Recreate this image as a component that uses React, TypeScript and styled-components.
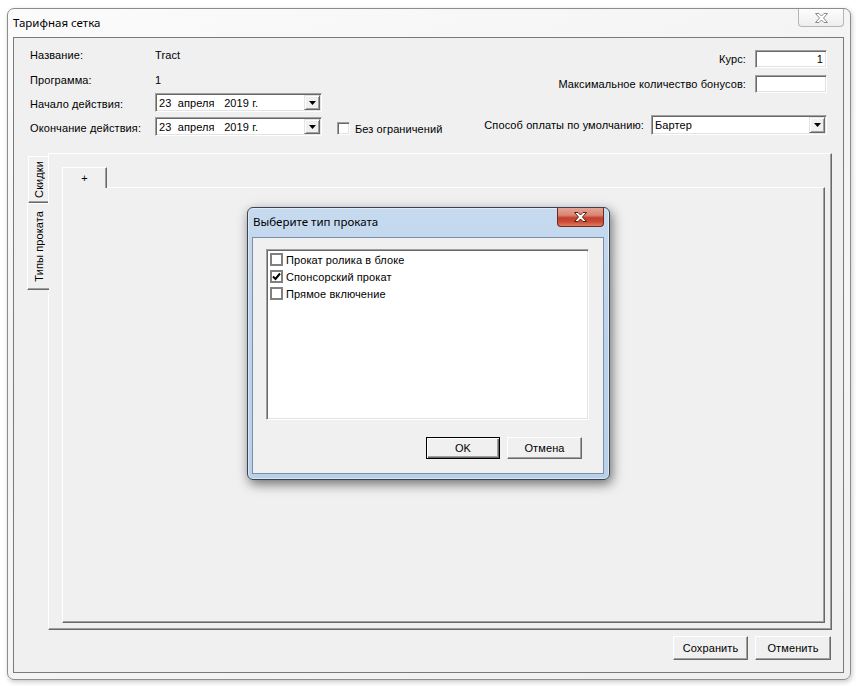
import React from "react";
import styled, { createGlobalStyle, css } from "styled-components";

const Global = createGlobalStyle`
  html, body { margin: 0; padding: 0; background: #ffffff; }
  body {
    font-family: "Liberation Sans", Arial, sans-serif;
    font-size: 11px;
    letter-spacing: 0.1px;
    color: #000;
  }
  * { box-sizing: border-box; }
`;

const sunken = css`
  border: 1px solid;
  border-color: #a0a0a0 #ffffff #ffffff #a0a0a0;
  box-shadow: inset 1px 1px 0 #696969, inset -1px -1px 0 #e3e3e3;
  background: #ffffff;
  padding: 1px;
`;

const raised = css`
  border: 1px solid;
  border-color: #ffffff #696969 #696969 #ffffff;
  box-shadow: inset -1px -1px 0 #a0a0a0;
  background: #f0f0f0;
`;

const Screen = styled.div`
  position: relative;
  width: 856px;
  height: 686px;
  padding: 8px 0 0 7px;
  overflow: hidden;
  background: #ffffff;
`;

const Window = styled.div`
  width: 844px;
  height: 672px;
  border: 1px solid #8c8c8c;
  border-radius: 7px;
  background: linear-gradient(160deg, #fbfbfb 0%, #f3f3f3 40%, #f6f6f6 60%, #efefef 100%);
  box-shadow: 1px 2px 5px rgba(0, 0, 0, 0.22);
  display: flex;
  flex-direction: column;
`;

const TitleBar = styled.div`
  height: 28px;
  display: flex;
  justify-content: space-between;
  align-items: flex-start;
  padding: 0 6px 0 5px;
`;

const TitleText = styled.div`
  font-family: "Noto Sans", "Open Sans", sans-serif;
  font-size: 11.5px;
  letter-spacing: 0;
  line-height: 28px;
  color: #000;
`;

const InactiveClose = styled.div`
  width: 46px;
  height: 18px;
  border: 1px solid #b5b5b5;
  border-top: none;
  border-radius: 0 0 4px 4px;
  background: linear-gradient(#fdfdfd, #eeeeee);
  display: flex;
  align-items: center;
  justify-content: center;
`;

const Client = styled.div`
  flex: 1;
  margin: 0 6px 6px 5px;
  border: 1px solid #7a7a7a;
  background: #f0f0f0;
  display: flex;
  flex-direction: column;
`;

const TopForm = styled.div`
  height: 97px;
  display: flex;
  justify-content: space-between;
  padding: 8px 16px 0 16px;
`;

const LeftGrid = styled.div`
  display: grid;
  grid-template-columns: 125px auto;
  grid-template-rows: 18px 19px 19px 19px;
  row-gap: 5px;
  align-items: center;
`;

const Label = styled.div<{ $drop?: number }>`
  white-space: nowrap;
  padding-top: ${(p) => (p.$drop ?? 0) * 2}px;
`;

const Value = styled.div<{ $drop?: number }>`
  white-space: nowrap;
  padding-top: ${(p) => (p.$drop ?? 0) * 2}px;
`;

const Inline = styled.div`
  display: flex;
  align-items: center;
`;

const Combo = styled.div<{ $w: number; $h: number }>`
  ${sunken};
  width: ${(p) => p.$w}px;
  height: ${(p) => p.$h}px;
  display: flex;
  align-items: stretch;
`;

const ComboText = styled.div`
  flex: 1;
  padding-left: 2px;
  white-space: pre;
  display: flex;
  align-items: center;
`;

const DropButton = styled.div`
  width: 16px;
  border: 1px solid;
  border-color: #e3e3e3 #696969 #696969 #e3e3e3;
  box-shadow: inset 1px 1px 0 #ffffff, inset -1px -1px 0 #a0a0a0;
  background: #f0f0f0;
  display: flex;
  align-items: center;
  justify-content: center;
`;

const CheckGroup = styled.div`
  display: flex;
  align-items: center;
  gap: 5px;
  margin-left: 15px;
  padding-top: 4px;
`;

const SunkenBox = styled.div`
  ${sunken};
  width: 13px;
  height: 13px;
`;

const RightBlock = styled.div`
  display: flex;
  flex-direction: column;
  align-items: flex-end;
  padding-top: 4px;
`;

const FieldRow = styled.div<{ $gap: number; $top: number }>`
  display: flex;
  align-items: center;
  gap: ${(p) => p.$gap}px;
  margin-top: ${(p) => p.$top}px;
`;

const TextBox = styled.div<{ $w: number }>`
  ${sunken};
  width: ${(p) => p.$w}px;
  height: 18px;
  text-align: right;
  padding-right: 3px;
  line-height: 14px;
`;

const TabArea = styled.div`
  flex: 1;
  display: flex;
  margin: 18px 11px 0 13px;
`;

const SideTabs = styled.div`
  width: 21px;
  flex-shrink: 0;
  display: flex;
  flex-direction: column;
  padding-top: 3px;
`;

const SideTab = styled.div<{ $active?: boolean; $h: number }>`
  height: ${(p) => p.$h}px;
  border-top: 1px solid #ffffff;
  border-left: 1px solid #ffffff;
  border-bottom: 1px solid #696969;
  box-shadow: inset 0 -1px 0 #a0a0a0;
  background: #f0f0f0;
  display: flex;
  align-items: center;
  justify-content: center;
  position: relative;
  ${(p) =>
    p.$active
      ? css`
          width: 22px;
          margin-right: -1px;
          z-index: 1;
        `
      : css`
          width: 20px;
          margin-left: 1px;
        `}
`;

const VerticalText = styled.span`
  writing-mode: vertical-rl;
  transform: rotate(180deg);
  white-space: nowrap;
`;

const Panel = styled.div`
  flex: 1;
  border-top: 1px solid #ffffff;
  border-left: 1px solid #ffffff;
  border-right: 1px solid #696969;
  border-bottom: 1px solid #696969;
  box-shadow: inset -1px -1px 0 #a0a0a0;
  padding: 13px 6px 6px 13px;
  display: flex;
  flex-direction: column;
`;

const TopTabs = styled.div`
  height: 20px;
  display: flex;
`;

const TopTab = styled.div`
  width: 45px;
  height: 21px;
  margin-bottom: -1px;
  position: relative;
  z-index: 1;
  background: #f0f0f0;
  border-top: 1px solid #ffffff;
  border-left: 1px solid #ffffff;
  border-right: 1px solid #696969;
  box-shadow: inset -1px 0 0 #a0a0a0;
  display: flex;
  align-items: center;
  justify-content: center;
  padding-bottom: 1px;
`;

const Page = styled.div`
  flex: 1;
  border-top: 1px solid #ffffff;
  border-left: 1px solid #ffffff;
  border-right: 1px solid #696969;
  border-bottom: 1px solid #696969;
  box-shadow: inset -1px -1px 0 #a0a0a0;
`;

const ButtonRow = styled.div<{ $pad: string; $top?: number }>`
  display: flex;
  justify-content: flex-end;
  gap: 7px;
  padding: ${(p) => p.$pad};
  margin-top: ${(p) => p.$top ?? 0}px;
`;

const WinButton = styled.div<{ $w: number; $h: number; $default?: boolean }>`
  width: ${(p) => p.$w}px;
  height: ${(p) => p.$h}px;
  ${raised};
  display: flex;
  align-items: center;
  justify-content: center;
  ${(p) =>
    p.$default &&
    css`
      border: 1px solid #000000;
      box-shadow: inset 1px 1px 0 #ffffff, inset -1px -1px 0 #696969,
        inset -2px -2px 0 #a0a0a0;
    `}
`;

/* ---------- dialog ---------- */

const Dialog = styled.div`
  position: absolute;
  left: 247px;
  top: 207px;
  width: 363px;
  height: 273px;
  border: 1px solid #3a4350;
  border-radius: 6px;
  background: linear-gradient(#c6daef 0%, #bcd3eb 40%, #b8d0ea 100%);
  box-shadow: 2px 4px 12px rgba(0, 0, 0, 0.55), inset 0 0 0 1px rgba(255, 255, 255, 0.45);
  display: flex;
  flex-direction: column;
`;

const DialogTitleBar = styled.div`
  height: 29px;
  display: flex;
  justify-content: space-between;
  align-items: flex-start;
  padding: 0 5px 0 5px;
`;

const RedClose = styled.div`
  width: 47px;
  height: 19px;
  border: 1px solid #6e2a20;
  border-top: none;
  border-radius: 0 0 4px 4px;
  background: linear-gradient(#e4a596 0%, #d98573 40%, #c4402b 55%, #c84a35 75%, #e07a5f 100%);
  display: flex;
  align-items: center;
  justify-content: center;
`;

const DialogClient = styled.div`
  flex: 1;
  margin: 0 5px 5px 4px;
  border: 1px solid #7b8ea6;
  background: #f0f0f0;
  padding: 11px 20px 0 13px;
  display: flex;
  flex-direction: column;
`;

const ListBox = styled.div`
  ${sunken};
  width: 323px;
  height: 171px;
  padding: 1px 1px 1px 3px;
`;

const ListItem = styled.div`
  height: 17px;
  display: flex;
  align-items: center;
  gap: 3px;
  white-space: nowrap;
`;

const FlatBox = styled.div`
  width: 13px;
  height: 13px;
  border: 2px solid #808080;
  background: #ffffff;
  display: flex;
  align-items: center;
  justify-content: center;
`;

const XGlyph = ({ fill, stroke }: { fill: string; stroke: string }) => (
  <svg width="13" height="10" viewBox="0 0 13 10">
    <polygon
      points="0.5,0.5 4,0.5 6.5,3 9,0.5 12.5,0.5 8.5,5 12.5,9.5 9,9.5 6.5,7 4,9.5 0.5,9.5 4.5,5"
      fill={fill}
      stroke={stroke}
      strokeWidth="1"
      strokeLinejoin="round"
    />
  </svg>
);

const Arrow = () => (
  <svg width="7" height="4" viewBox="0 0 7 4">
    <polygon points="0,0 7,0 3.5,4" fill="#000" />
  </svg>
);

const Check = () => (
  <svg width="9" height="9" viewBox="0 0 9 9">
    <path d="M1 4.5 L3.5 7 L8 1.5" fill="none" stroke="#000" strokeWidth="2" />
  </svg>
);

export default function App() {
  return (
    <Screen>
      <Global />
      <Window>
        <TitleBar>
          <TitleText>Тарифная сетка</TitleText>
          <InactiveClose>
            <XGlyph fill="#ffffff" stroke="#8a8a8a" />
          </InactiveClose>
        </TitleBar>
        <Client>
          <TopForm>
            <LeftGrid>
              <Label>Название:</Label>
              <Value>Tract</Value>
              <Label $drop={1}>Программа:</Label>
              <Value $drop={1}>1</Value>
              <Label $drop={1}>Начало действия:</Label>
              <Combo $w={167} $h={19}>
                <ComboText>{"23  апреля   2019 г."}</ComboText>
                <DropButton>
                  <Arrow />
                </DropButton>
              </Combo>
              <Label $drop={1}>Окончание действия:</Label>
              <Inline>
                <Combo $w={167} $h={19}>
                  <ComboText>{"23  апреля   2019 г."}</ComboText>
                  <DropButton>
                    <Arrow />
                  </DropButton>
                </Combo>
                <CheckGroup>
                  <SunkenBox />
                  <span>Без ограничений</span>
                </CheckGroup>
              </Inline>
            </LeftGrid>
            <RightBlock>
              <FieldRow $gap={9} $top={0}>
                <Label>Курс:</Label>
                <TextBox $w={72}>1</TextBox>
              </FieldRow>
              <FieldRow $gap={9} $top={7}>
                <Label>Максимальное количество бонусов:</Label>
                <TextBox $w={72} />
              </FieldRow>
              <FieldRow $gap={7} $top={22}>
                <Label>Способ оплаты по умолчанию:</Label>
                <Combo $w={176} $h={20}>
                  <ComboText>Бартер</ComboText>
                  <DropButton>
                    <Arrow />
                  </DropButton>
                </Combo>
              </FieldRow>
            </RightBlock>
          </TopForm>

          <TabArea>
            <SideTabs>
              <SideTab $h={47}>
                <VerticalText>Скидки</VerticalText>
              </SideTab>
              <SideTab $h={87} $active>
                <VerticalText>Типы проката</VerticalText>
              </SideTab>
            </SideTabs>
            <Panel>
              <TopTabs>
                <TopTab>+</TopTab>
              </TopTabs>
              <Page />
            </Panel>
          </TabArea>

          <ButtonRow $pad="6px 12px 12px 0">
            <WinButton $w={75} $h={24}>Сохранить</WinButton>
            <WinButton $w={76} $h={24}>Отменить</WinButton>
          </ButtonRow>
        </Client>
      </Window>

      <Dialog>
        <DialogTitleBar>
          <TitleText>Выберите тип проката</TitleText>
          <RedClose>
            <XGlyph fill="#ffffff" stroke="#5a1d14" />
          </RedClose>
        </DialogTitleBar>
        <DialogClient>
          <ListBox>
            <ListItem>
              <FlatBox />
              Прокат ролика в блоке
            </ListItem>
            <ListItem>
              <FlatBox>
                <Check />
              </FlatBox>
              Спонсорский прокат
            </ListItem>
            <ListItem>
              <FlatBox />
              Прямое включение
            </ListItem>
          </ListBox>
          <ButtonRow $pad="0 1px 0 0" $top={17}>
            <WinButton $w={74} $h={22} $default>
              OK
            </WinButton>
            <WinButton $w={75} $h={22}>
              Отмена
            </WinButton>
          </ButtonRow>
        </DialogClient>
      </Dialog>
    </Screen>
  );
}
